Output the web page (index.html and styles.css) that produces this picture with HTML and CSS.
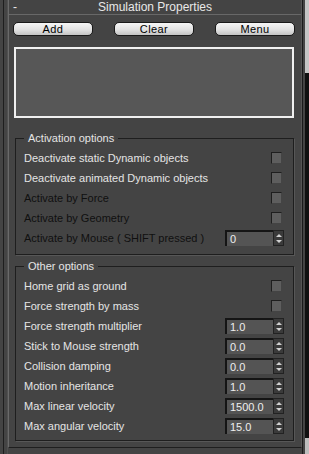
FILE: index.html
```html
<!DOCTYPE html>
<html lang="en">
<head>
    <meta charset="UTF-8">
    <meta name="viewport" content="width=device-width, initial-scale=1.0">
    <title>Simulation Properties</title>
    <link rel="stylesheet" href="styles.css">
</head>
<body>

    <div class="window">
        <div class="rail"></div>

        <div class="panel">
            <div class="rollout-title">
                <span class="collapse">-</span>
                <span class="title">Simulation Properties</span>
            </div>

            <div class="rollout-body">
                <div class="button-row">
                    <button class="btn">Add</button>
                    <button class="btn">Clear</button>
                    <button class="btn">Menu</button>
                </div>

                <div class="list-box"></div>

                <!-- Activation options -->
                <fieldset class="group activation">
                    <legend>Activation options</legend>
                    <div class="option"><span>Deactivate static Dynamic objects</span><span class="check"></span></div>
                    <div class="option"><span>Deactivate animated Dynamic objects</span><span class="check"></span></div>
                    <div class="option disabled"><span>Activate by Force</span><span class="check"></span></div>
                    <div class="option disabled"><span>Activate by Geometry</span><span class="check"></span></div>
                    <div class="option disabled">
                        <span>Activate by Mouse ( SHIFT pressed )</span>
                        <span class="spinner"><span class="field">0</span><span class="arrows"><i class="up"></i><i class="down"></i></span></span>
                    </div>
                </fieldset>

                <!-- Other options -->
                <fieldset class="group other">
                    <legend>Other options</legend>
                    <div class="option"><span>Home grid as ground</span><span class="check"></span></div>
                    <div class="option"><span>Force strength by mass</span><span class="check"></span></div>
                    <div class="option">
                        <span>Force strength multiplier</span>
                        <span class="spinner"><span class="field">1.0</span><span class="arrows"><i class="up"></i><i class="down"></i></span></span>
                    </div>
                    <div class="option">
                        <span>Stick to Mouse strength</span>
                        <span class="spinner"><span class="field">0.0</span><span class="arrows"><i class="up"></i><i class="down"></i></span></span>
                    </div>
                    <div class="option">
                        <span>Collision damping</span>
                        <span class="spinner"><span class="field">0.0</span><span class="arrows"><i class="up"></i><i class="down"></i></span></span>
                    </div>
                    <div class="option">
                        <span>Motion inheritance</span>
                        <span class="spinner"><span class="field">1.0</span><span class="arrows"><i class="up"></i><i class="down"></i></span></span>
                    </div>
                    <div class="option">
                        <span>Max linear velocity</span>
                        <span class="spinner"><span class="field">1500.0</span><span class="arrows"><i class="up"></i><i class="down"></i></span></span>
                    </div>
                    <div class="option">
                        <span>Max angular velocity</span>
                        <span class="spinner"><span class="field">15.0</span><span class="arrows"><i class="up"></i><i class="down"></i></span></span>
                    </div>
                </fieldset>
            </div>
        </div>

        <div class="scrollbar">
            <div class="thumb"></div>
            <div class="track"></div>
            <div class="thumb-end"></div>
        </div>
    </div>

</body>
</html>
```

FILE: styles.css
```css
body {
    margin: 0;
    background-color: #444444;
    font-family: "Liberation Sans", Arial, sans-serif;
    font-size: 11px;
    color: #e4e4e4;
    overflow: hidden;
}

.window {
    display: flex;
    width: 309px;
    height: 454px;
}

/* thin frame on the left */
.rail {
    margin-left: 3px;
    width: 3px;
    border-left: 1px solid #1e1e1e;
    border-right: 1px solid #505050;
}

.panel {
    width: 292px;
    height: 447px;
    border-left: 1px solid #6a6a6a;
    border-right: 1px solid #555;
    border-bottom: 1px solid #1e1e1e;
}

.rollout-title {
    position: relative;
    height: 14px;
    line-height: 14px;
    border-bottom: 1px solid #686868;
    text-align: center;
    font-size: 12px;
    color: #e8e8e8;
}

.collapse {
    position: absolute;
    left: 4px;
    top: 0;
    font-size: 12px;
}

.rollout-body {
    padding: 7px 6px 0 4px;
}

.button-row {
    display: flex;
    justify-content: space-between;
}

.btn {
    width: 80px;
    height: 14px;
    padding: 0;
    border: 1px solid #1a1a1a;
    border-radius: 5px;
    background: linear-gradient(#f6f6f6, #e2e2e2 55%, #c4c4c4);
    font-family: "Liberation Sans", Arial, sans-serif;
    font-size: 11px;
    line-height: 12px;
    letter-spacing: 0.4px;
    color: #000;
}

.list-box {
    margin: 11px 0 0 1px;
    width: 280px;
    height: 71px;
    box-sizing: border-box;
    border: 2px solid #f0f0f0;
    background-color: #575757;
}

.group {
    margin: 14px 0 0 2px;
    width: 279px;
    box-sizing: border-box;
    border: 1px solid #1e1e1e;
    box-shadow: 1px 1px 0 #575757;
    padding: 4px 9px 6px 8px;
}

.group.other {
    margin-top: 5px;
    padding-bottom: 4px;
}

.group legend {
    padding: 0 4px;
    margin: 0;
    line-height: 12px;
    color: #e4e4e4;
}

.option {
    display: flex;
    align-items: center;
    justify-content: space-between;
    height: 20px;
}

.option.disabled {
    color: #101010;
}

.check {
    width: 9px;
    height: 10px;
    margin-right: 2px;
    border: 1px solid #1e1e1e;
    border-right-color: #444;
    border-bottom-color: #444;
    background-color: #5e5e5e;
}

.spinner {
    display: flex;
    height: 16px;
}

.field {
    width: 43px;
    height: 14px;
    line-height: 15px;
    padding-left: 3px;
    border-top: 2px solid #151515;
    border-left: 2px solid #151515;
    background-color: #545454;
    color: #eeeeee;
}

.arrows {
    display: flex;
    flex-direction: column;
    justify-content: center;
    align-items: center;
    gap: 3px;
    width: 9px;
    height: 14px;
    border: 1px solid #222;
    background-color: #3a3a3a;
}

.arrows i {
    width: 0;
    height: 0;
    border-left: 3px solid transparent;
    border-right: 3px solid transparent;
}

.arrows .up {
    border-bottom: 3px solid #d0d0d0;
}

.arrows .down {
    border-top: 3px solid #d0d0d0;
}

.scrollbar {
    display: flex;
    flex-direction: column;
    width: 6px;
    border-left: 1px solid #1a1a1a;
}

.thumb {
    height: 73px;
    margin-left: 2px;
    background-color: #c4c4c4;
}

.track {
    flex: 1;
    margin-left: 2px;
    background-color: #101010;
}

.thumb-end {
    height: 16px;
    margin-left: 2px;
    background-color: #bdbdbd;
}
```
